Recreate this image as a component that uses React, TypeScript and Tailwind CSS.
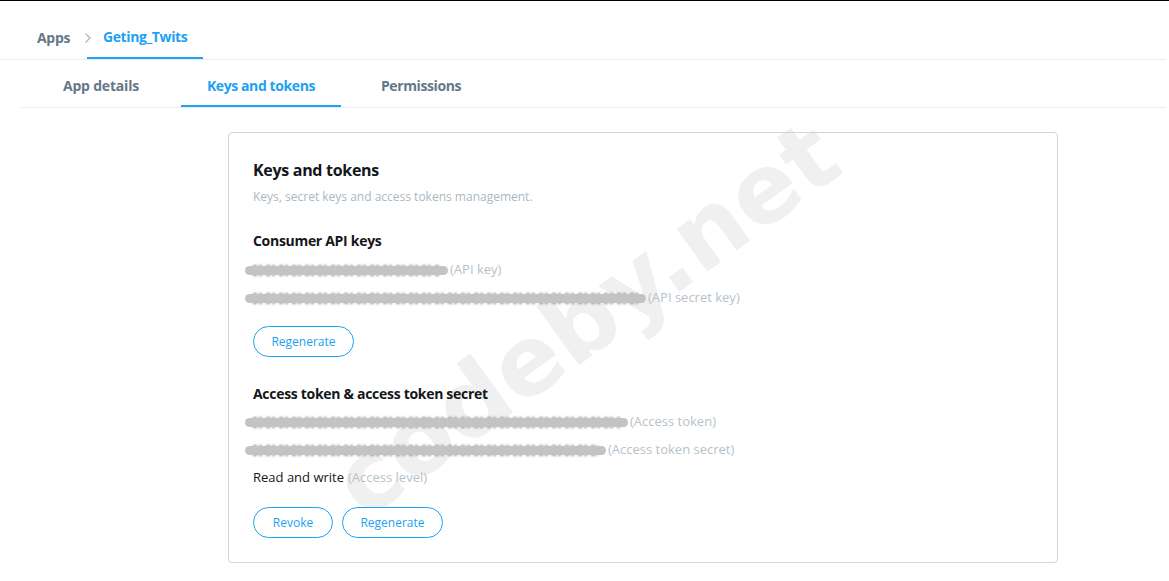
import React from "react";

const font = { fontFamily: '"Open Sans", "Noto Sans", sans-serif' };

function Redacted({ width }: { width: number }) {
  return (
    <span className="relative inline-block h-[14px] align-middle" style={{ width }}>
      {/* the real text peeks out above and below the smudge */}
      <span className="absolute inset-x-[8px] top-[2px] h-[11px] bg-[repeating-linear-gradient(90deg,#3a3a3a_0_4px,transparent_4px_6px,#3a3a3a_6px_9px,transparent_9px_13px)] opacity-50 blur-[0.8px]" />
      <span className="absolute inset-x-0 top-[3px] h-[9px] rounded-full bg-[#c3c3c3] blur-[0.6px]" />
    </span>
  );
}

function KeyRow({ width, label }: { width: number; label: string }) {
  return (
    <div className="-ml-[8px] flex h-[28px] items-center">
      <Redacted width={width} />
      <span className="ml-[2px] text-[13px] text-[#b6c2cb]">({label})</span>
    </div>
  );
}

function PillButton({ children, w }: { children: React.ReactNode; w: string }) {
  return (
    <button
      type="button"
      className={`h-[31px] ${w} rounded-full border border-[#1da1f2] bg-white text-[12px] text-[#1da1f2]`}
    >
      {children}
    </button>
  );
}

export default function App() {
  return (
    <div className="relative h-[581px] w-[1169px] overflow-hidden border-t border-black bg-white" style={font}>
      {/* watermark, sits behind everything */}
      <div
        className="pointer-events-none absolute left-[586px] top-[318px] z-0 -translate-x-1/2 -translate-y-1/2 -rotate-[36deg] select-none whitespace-nowrap text-[96px] font-bold leading-none text-[#f0f0f0]"
        style={{ fontFamily: '"DejaVu Sans", sans-serif' }}
      >
        codeby.net
      </div>

      <div className="relative z-10">
        {/* breadcrumb */}
        <div className="mr-[3px] flex h-[59px] border-b border-[#e6ecf0]">
          <div className="flex h-[58px] items-center pl-[37px] pt-[15px]">
            <span className="text-[14px] font-bold tracking-[-0.3px] text-[#657786]">Apps</span>
            <svg className="ml-[14px] h-[12px] w-[8px]" viewBox="0 0 8 12" fill="none">
              <path d="M1.5 1.5 6 6l-4.5 4.5" stroke="#aab8c2" strokeWidth="1.3" />
            </svg>
          </div>
          <div className="ml-[-5px] flex h-[58px] w-[116px] items-center justify-center border-b-2 border-[#1da1f2] pt-[15px]">
            <span className="text-[14px] font-bold tracking-[-0.4px] text-[#1da1f2]">Geting_Twits</span>
          </div>
        </div>

        {/* tabs */}
        <div className="ml-[21px] mr-[3px] flex h-[48px] border-b border-[#e6ecf0]">
          <div className="flex w-[160px] items-center justify-center pt-[3px]">
            <span className="text-[14px] font-bold tracking-[-0.2px] text-[#657786]">App details</span>
          </div>
          <div className="flex w-[160px] items-center justify-center border-b-2 border-[#1da1f2] pt-[5px]">
            <span className="text-[14px] font-bold tracking-[-0.4px] text-[#1da1f2]">Keys and tokens</span>
          </div>
          <div className="flex w-[160px] items-center justify-center pt-[3px]">
            <span className="text-[14px] font-bold tracking-[-0.4px] text-[#657786]">Permissions</span>
          </div>
        </div>

        {/* card */}
        <div className="ml-[228px] mt-[24px] h-[431px] w-[830px] rounded-[4px] border border-[#ccd6dd] px-[24px] pt-[25px]">
          <h2 className="text-[16px] font-bold tracking-[-0.3px] text-[#14171a]">Keys and tokens</h2>
          <p className="mt-[6px] text-[12px] text-[#aab8c2]">Keys, secret keys and access tokens management.</p>

          <h3 className="mt-[24px] text-[14px] font-bold tracking-[-0.3px] text-[#14171a]">Consumer API keys</h3>
          <div className="mt-[5px]">
            <KeyRow width={203} label="API key" />
            <KeyRow width={401} label="API secret key" />
          </div>
          <div className="mt-[14px]">
            <PillButton w="w-[101px]">Regenerate</PillButton>
          </div>

          <h3 className="mt-[26px] text-[14px] font-bold tracking-[-0.3px] text-[#14171a]">
            Access token &amp; access token secret
          </h3>
          <div className="mt-[4px]">
            <KeyRow width={383} label="Access token" />
            <KeyRow width={361} label="Access token secret" />
            <div className="flex h-[28px] items-center text-[13px]">
              <span className="text-[#14171a]">Read and write</span>
              <span className="ml-[4px] text-[#b6c2cb]">(Access level)</span>
            </div>
          </div>
          <div className="mt-[15px] flex gap-[9px]">
            <PillButton w="w-[80px]">Revoke</PillButton>
            <PillButton w="w-[101px]">Regenerate</PillButton>
          </div>
        </div>
      </div>
    </div>
  );
}
